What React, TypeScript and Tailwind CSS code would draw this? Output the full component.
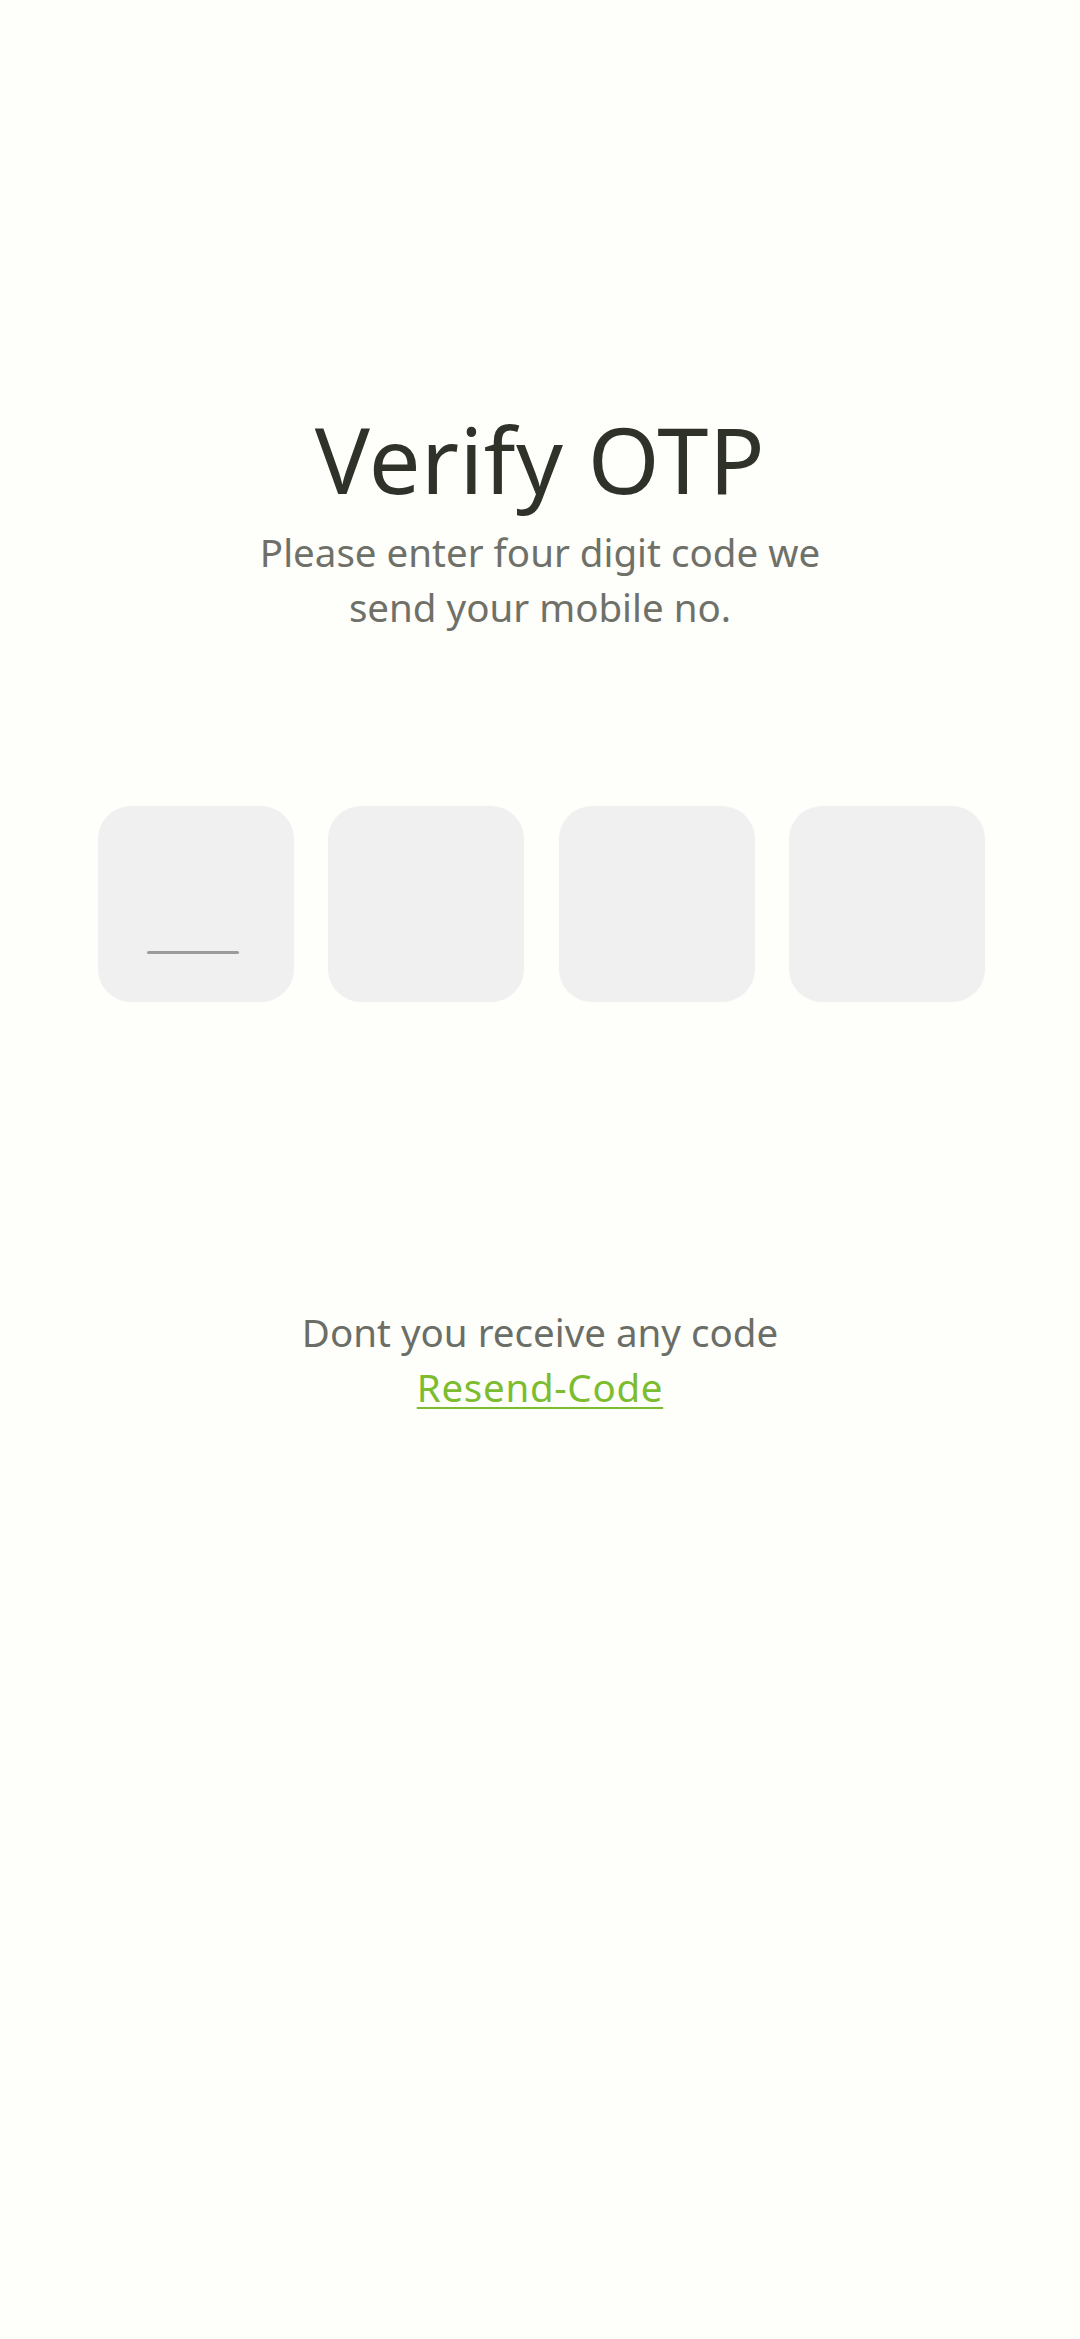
import React from "react";

export default function App() {
  return (
    <div className="min-h-[2339px] w-full bg-[#fefefb] font-['Noto_Sans',sans-serif] flex flex-col items-center">
      <h1 className="mt-[413px] text-[92px] leading-[92px] font-normal tracking-[0.5px] text-[#2e3229] text-center">
        Verify OTP
      </h1>
      <p className="mt-[20px] text-[38.5px] leading-[55px] text-[#6f7169] text-center">
        Please enter four digit code we
        <br />
        send your mobile no.
      </p>
      <div className="mt-[171px] w-full pl-[98px] pr-[95px] flex justify-between">
        <div className="w-[196px] h-[196px] rounded-[33px] bg-[#f0f0f0] flex items-end justify-center pb-[48px] pr-[6px]">
          <div className="w-[92px] h-[3px] rounded-full bg-[#9b9b9b]" />
        </div>
        <div className="w-[196px] h-[196px] rounded-[33px] bg-[#f0f0f0]" />
        <div className="w-[196px] h-[196px] rounded-[33px] bg-[#f0f0f0]" />
        <div className="w-[196px] h-[196px] rounded-[33px] bg-[#f0f0f0]" />
      </div>
      <div className="mt-[303px] flex flex-col items-center text-[38.5px] leading-[55px] text-center">
        <p className="text-[#6b6e66]">Dont you receive any code</p>
        <a className="text-[#7cbd30] tracking-[0.7px] underline decoration-[2px] underline-offset-[5px]">
          Resend-Code
        </a>
      </div>
    </div>
  );
}
